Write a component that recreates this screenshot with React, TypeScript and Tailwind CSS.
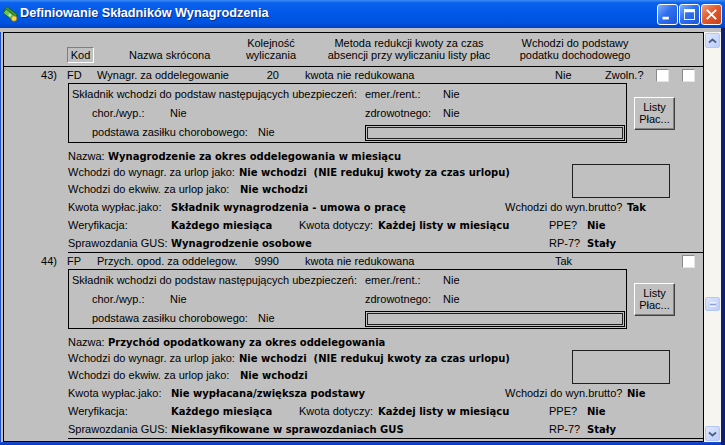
import React from "react";

const sans = "font-['Liberation_Sans',Arial,sans-serif] text-[11px] text-black";
const bold = "font-['DejaVu_Sans',sans-serif] font-bold text-[10px]";

type Rec = {
  num: string;
  code: string;
  name: string;
  order: string;
  method: string;
  tax: string;
  zwoln: boolean;
  nazwa: string;
  wyplac: string;
  brutto: string;
  gus: string;
};

const records: Rec[] = [
  {
    num: "43)",
    code: "FD",
    name: "Wynagr. za oddelegowanie",
    order: "20",
    method: "kwota nie redukowana",
    tax: "Nie",
    zwoln: true,
    nazwa: "Wynagrodzenie za okres oddelegowania w miesiącu",
    wyplac: "Składnik wynagrodzenia - umowa o pracę",
    brutto: "Tak",
    gus: "Wynagrodzenie osobowe",
  },
  {
    num: "44)",
    code: "FP",
    name: "Przych. opod. za oddelegow.",
    order: "9990",
    method: "kwota nie redukowana",
    tax: "Tak",
    zwoln: false,
    nazwa: "Przychód opodatkowany za okres oddelegowania",
    wyplac: "Nie wypłacana/zwiększa podstawy",
    brutto: "Nie",
    gus: "Nieklasyfikowane w sprawozdaniach GUS",
  },
];

function Check() {
  return (
    <span className="block w-[13px] h-[13px] bg-white border border-t-[#8a8a8a] border-l-[#8a8a8a] border-r-[#e4e4e4] border-b-[#e4e4e4]" />
  );
}

function Record({ r }: { r: Rec }) {
  return (
    <div className="flex flex-col">
      {/* main line */}
      <div className="flex items-center h-[16px] whitespace-nowrap">
        <span className="w-[53px] text-right">{r.num}</span>
        <span className="ml-[10px] w-[30px]">{r.code}</span>
        <span className="w-[120px]">{r.name}</span>
        <span className="w-[62px] text-right">{r.order}</span>
        <span className="ml-[26px] w-[250px]">{r.method}</span>
        <span className="w-[50px]">{r.tax}</span>
        {r.zwoln ? (
          <>
            <span className="w-[51px]">Zwoln.?</span>
            <Check />
          </>
        ) : (
          <span className="w-[64px]" />
        )}
        <span className="ml-[13px]">
          <Check />
        </span>
      </div>

      <div className="ml-[64px] border-b border-black whitespace-nowrap">
        {/* insurance box + button */}
        <div className="flex items-center">
          <div className="w-[559px] h-[60px] border border-black pl-[3px] pt-[1px]">
            <div className="flex items-center h-[19px]">
              <span className="w-[293px]">Składnik wchodzi do podstaw następujących ubezpieczeń:</span>
              <span className="w-[78px]">emer./rent.:</span>
              <span>Nie</span>
            </div>
            <div className="flex items-center h-[19px]">
              <span className="ml-[20px] w-[78px]">chor./wyp.:</span>
              <span className="w-[195px]">Nie</span>
              <span className="w-[78px]">zdrowotnego:</span>
              <span>Nie</span>
            </div>
            <div className="flex items-center h-[19px]">
              <span className="ml-[20px] w-[166px]">podstawa zasiłku chorobowego:</span>
              <span className="w-[107px]">Nie</span>
              <span className="w-[260px] h-[16px] border border-black shadow-[inset_0_0_0_1px_#c0c0c0,inset_0_0_0_2px_#202020]" />
            </div>
          </div>
          <button className="ml-[7px] w-[41px] h-[33px] flex flex-col items-center justify-center leading-[12px] bg-[#c0c0c0] border border-t-white border-l-white border-r-[#404040] border-b-[#404040] shadow-[inset_-1px_-1px_0_#808080]">
            <span>Listy</span>
            <span>Płac...</span>
          </button>
        </div>

        <div className="flex items-center h-[16px] mt-[5px]">
          <span className="w-[40px]">Nazwa:</span>
          <span className={bold}>{r.nazwa}</span>
        </div>

        <div className="flex">
          <div className="w-[504px] flex flex-col">
            <div className="flex items-center h-[17px]">
              <span className="w-[171px]">Wchodzi do wynagr. za urlop jako:</span>
              <span className={`${bold} whitespace-pre`}>Nie wchodzi  (NIE redukuj kwoty za czas urlopu)</span>
            </div>
            <div className="flex items-center h-[17px]">
              <span className="w-[172px]">Wchodzi do ekwiw. za urlop jako:</span>
              <span className={bold}>Nie wchodzi</span>
            </div>
          </div>
          <div className="w-[98px] h-[34px] border border-[#202020]" />
        </div>

        <div className="flex items-center h-[18px]">
          <span className="w-[103px]">Kwota wypłac.jako:</span>
          <span className={`${bold} w-[334px]`}>{r.wyplac}</span>
          <span className="w-[122px]">Wchodzi do wyn.brutto?</span>
          <span className={bold}>{r.brutto}</span>
        </div>
        <div className="flex items-center h-[18px]">
          <span className="w-[103px]">Weryfikacja:</span>
          <span className={`${bold} w-[128px]`}>Każdego miesiąca</span>
          <span className="w-[79px]">Kwota dotyczy:</span>
          <span className={`${bold} w-[171px]`}>Każdej listy w miesiącu</span>
          <span className="w-[38px]">PPE?</span>
          <span className={bold}>Nie</span>
        </div>
        <div className="flex items-center h-[18px]">
          <span className="w-[103px]">Sprawozdania GUS:</span>
          <span className={`${bold} w-[378px]`}>{r.gus}</span>
          <span className="w-[38px]">RP-7?</span>
          <span className={bold}>Stały</span>
        </div>
      </div>
    </div>
  );
}

function Header() {
  return (
    <div className="flex h-[34px] border-b border-black pt-[4px] leading-[12px] whitespace-nowrap">
      <div className="w-[63px]" />
      <div className="mt-[10px] w-[27px] h-[16px] flex items-center justify-center border border-t-[#808080] border-l-[#808080] border-r-white border-b-white">
        Kod
      </div>
      <div className="w-[35px]" />
      <div className="w-[102px] mt-[12px]">Nazwa skrócona</div>
      <div className="w-[80px] flex flex-col items-center">
        <span>Kolejność</span>
        <span>wyliczania</span>
      </div>
      <div className="w-[196px] flex flex-col items-center">
        <span>Metoda redukcji kwoty za czas</span>
        <span>absencji przy wyliczaniu listy płac</span>
      </div>
      <div className="w-[136px] flex flex-col items-center">
        <span>Wchodzi do podstawy</span>
        <span>podatku dochodowego</span>
      </div>
    </div>
  );
}

function Chevron({ down }: { down?: boolean }) {
  return (
    <svg width="9" height="6" viewBox="0 0 9 6">
      <path
        d={down ? "M1 1.5 L4.5 4.5 L8 1.5" : "M1 4.5 L4.5 1.5 L8 4.5"}
        fill="none"
        stroke="#4d6185"
        strokeWidth="1.8"
      />
    </svg>
  );
}

function ScrollBtn({ down }: { down?: boolean }) {
  return (
    <div className="w-[15px] h-[15px] mx-auto rounded-[2px] border border-[#b5c8f3] bg-[linear-gradient(135deg,#dfe8fe,#bccdf8)] flex items-center justify-center">
      <Chevron down={down} />
    </div>
  );
}

function Scrollbar() {
  return (
    <div className="w-[17px] h-full bg-[#f6f5f0] flex flex-col py-[1px]">
      <ScrollBtn />
      <div className="h-[249px]" />
      <div className="w-[15px] h-[14px] mx-auto rounded-[2px] border border-[#b5c8f3] bg-[linear-gradient(135deg,#dbe5fd,#bdcdf7)] flex flex-col items-center justify-center gap-[1px]">
        <span className="block w-[6px] h-px bg-[#eef3ff]" />
        <span className="block w-[6px] h-px bg-[#8ca3d8]" />
        <span className="block w-[6px] h-px bg-[#eef3ff]" />
      </div>
      <div className="flex-1" />
      <ScrollBtn down />
    </div>
  );
}

function MoneyIcon() {
  return (
    <svg width="16" height="16" viewBox="0 0 16 16">
      <g transform="rotate(38 8 8)">
        <rect x="1" y="4" width="13" height="5" fill="#3f9a36" stroke="#1d5a1a" strokeWidth="0.8" />
        <rect x="2" y="6.5" width="13" height="5" fill="#6cc35a" stroke="#1d5a1a" strokeWidth="0.8" />
        <circle cx="8.5" cy="9" r="1.4" fill="#c6eab4" />
      </g>
      <circle cx="12" cy="12.5" r="2.8" fill="#f3d84a" stroke="#9b7d12" strokeWidth="0.8" />
    </svg>
  );
}

function TitleBtn({ kind }: { kind: "min" | "max" | "close" }) {
  const base =
    kind === "close"
      ? "bg-[linear-gradient(135deg,#f29b7c,#e35a2b_45%,#c6401a)]"
      : "bg-[linear-gradient(135deg,#7fb0ff,#2e6ff0_45%,#1e56d8)]";
  return (
    <div className={`w-[21px] h-[21px] rounded-[3px] border border-white flex items-center justify-center ${base}`}>
      {kind === "min" && (
        <svg width="21" height="21" viewBox="0 0 21 21">
          <rect x="5" y="13" width="7" height="3" fill="white" />
        </svg>
      )}
      {kind === "max" && (
        <svg width="21" height="21" viewBox="0 0 21 21">
          <rect x="5" y="5" width="11" height="11" fill="none" stroke="white" strokeWidth="1" />
          <rect x="5" y="5" width="11" height="3" fill="white" />
        </svg>
      )}
      {kind === "close" && (
        <svg width="21" height="21" viewBox="0 0 21 21">
          <path d="M6 6 L15 15 M15 6 L6 15" stroke="white" strokeWidth="2" strokeLinecap="square" />
        </svg>
      )}
    </div>
  );
}

export default function App() {
  return (
    <div className={`w-[725px] h-[445px] overflow-hidden flex flex-col bg-[#c0c0c0] ${sans}`}>
      {/* title bar */}
      <div className="h-[28px] flex items-center pl-[2px] pr-[3px] bg-[linear-gradient(to_bottom,#3d8cf6_0%,#0b62ee_10%,#0258e8_45%,#0053e1_80%,#0043c4_100%)]">
        <MoneyIcon />
        <span className="ml-[2px] text-white font-['Liberation_Sans',Arial,sans-serif] font-bold text-[12.7px] [text-shadow:1px_1px_0_#0a2e8a]">
          Definiowanie Składników Wynagrodzenia
        </span>
        <div className="ml-auto flex gap-[1px]">
          <TitleBtn kind="min" />
          <TitleBtn kind="max" />
          <TitleBtn kind="close" />
        </div>
      </div>

      <div className="flex flex-1">
        <div className="flex flex-col flex-1">
          <div className="h-[4px]" />
          <div className="flex h-[410px]">
            <div className="w-[3px] border-l border-[#2050c8]" />
            <div className="w-[701px] h-full border border-black overflow-hidden">
              <Header />
              {records.map((r) => (
                <Record key={r.num} r={r} />
              ))}
            </div>
            <Scrollbar />
          </div>
          <div className="h-[3px] bg-[linear-gradient(to_bottom,#1b4fd8,#0a36b8)]" />
        </div>
        <div className="w-[4px] bg-[#0e1f6e]" />
      </div>
    </div>
  );
}
